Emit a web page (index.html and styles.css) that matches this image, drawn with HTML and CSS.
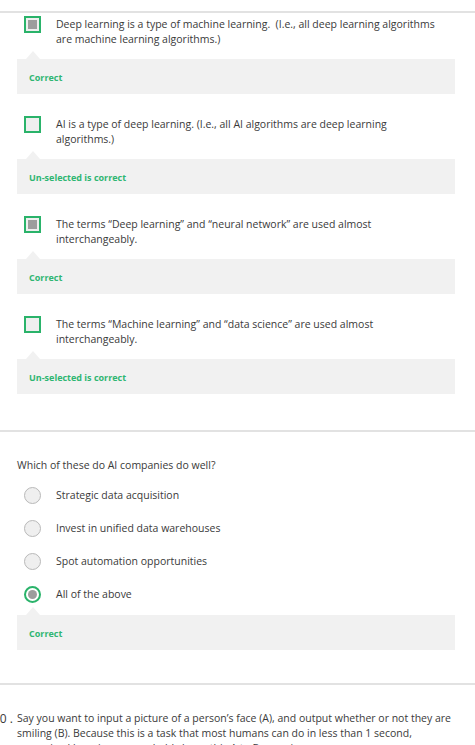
FILE: index.html
```html
<!DOCTYPE html>
<html>
<head>
<meta charset="utf-8">
<link rel="stylesheet" href="styles.css">
</head>
<body>
<div class="page">
  <hr class="divider top">
  <div class="quiz">
    <div class="option">
      <span class="check checked"></span>
      <span class="label">Deep learning is a type of machine learning.&nbsp; (I.e., all deep learning algorithms are machine learning algorithms.)</span>
    </div>
    <div class="feedback"><span>Correct</span></div>

    <div class="option">
      <span class="check"></span>
      <span class="label">AI is a type of deep learning. (I.e., all AI algorithms are deep learning algorithms.)</span>
    </div>
    <div class="feedback"><span>Un-selected is correct</span></div>

    <div class="option">
      <span class="check checked"></span>
      <span class="label">The terms “Deep learning” and “neural network” are used almost interchangeably.</span>
    </div>
    <div class="feedback"><span>Correct</span></div>

    <div class="option">
      <span class="check"></span>
      <span class="label">The terms “Machine learning” and “data science” are used almost interchangeably.</span>
    </div>
    <div class="feedback"><span>Un-selected is correct</span></div>
  </div>

  <hr class="divider mid">

  <div class="quiz q9">
    <p class="prompt">Which of these do AI companies do well?</p>
    <div class="radio-row"><span class="radio"></span><span class="label">Strategic data acquisition</span></div>
    <div class="radio-row"><span class="radio"></span><span class="label">Invest in unified data warehouses</span></div>
    <div class="radio-row"><span class="radio"></span><span class="label">Spot automation opportunities</span></div>
    <div class="radio-row"><span class="radio selected"></span><span class="label">All of the above</span></div>
    <div class="feedback radio-fb"><span>Correct</span></div>
  </div>

  <hr class="divider bottom">

  <div class="question">
    <span class="num">10.</span>
    <p class="qtext">Say you want to input a picture of a person’s face (A), and output whether or not they are smiling (B). Because this is a task that most humans can do in less than 1 second, supervised learning can probably learn this A to B mapping.</p>
  </div>
</div>
</body>
</html>
```
FILE: styles.css
```css
html, body {
  margin: 0;
  padding: 0;
  background: #fff;
}
body {
  font-family: "Open Sans", "DejaVu Sans", sans-serif;
  font-size: 10.5px;
  color: #3a3a3a;
  width: 475px;
  height: 745px;
  overflow: hidden;
}
.page {
  padding-top: 11px;
}
.divider {
  margin: 0;
  border: 0;
  border-top: 2px solid #e2e2e2;
  height: 0;
}
.quiz {
  padding: 0 20px 0 17px;
}
.option {
  display: flex;
  align-items: flex-start;
  padding-left: 7px;
  margin-top: 3px;
}
.check {
  flex: 0 0 auto;
  width: 13px;
  height: 13px;
  border: 2px solid #2ab36a;
  background: #efefef;
  box-sizing: content-box;
  position: relative;
}
.check.checked::after {
  content: "";
  position: absolute;
  left: 2px;
  top: 2px;
  width: 9px;
  height: 9px;
  background: #9d9d9d;
}
.label {
  margin-left: 15px;
  line-height: 14.5px;
  padding-top: 1px;
  max-width: 386px;
}
.feedback {
  position: relative;
  background: #f1f1f1;
  height: 35px;
  margin-top: 13px;
  margin-bottom: 22px;
  display: flex;
  align-items: center;
  padding-left: 12px;
}
.feedback::before {
  content: "";
  position: absolute;
  left: 9px;
  top: -8px;
  border-left: 7px solid transparent;
  border-right: 7px solid transparent;
  border-bottom: 8px solid #f1f1f1;
}
.feedback span {
  color: #2fb672;
  font-weight: 700;
  font-size: 9px;
  margin-top: 1px;
}
.divider.mid {
  margin-top: 36px;
}
.q9 {
  padding-top: 26px;
}
.prompt {
  margin: 0 0 15px 0;
  line-height: 14px;
}
.radio-row {
  display: flex;
  align-items: center;
  padding-left: 7px;
  height: 17px;
  margin-bottom: 16px;
}
.radio {
  flex: 0 0 auto;
  width: 15px;
  height: 15px;
  border-radius: 50%;
  border: 1px solid #b9b9b9;
  background: #efefef;
  box-sizing: content-box;
  position: relative;
}
.radio.selected {
  width: 13px;
  height: 13px;
  border: 2px solid #2ab36a;
  background: #fff;
}
.radio.selected::after {
  content: "";
  position: absolute;
  left: 2px;
  top: 2px;
  width: 9px;
  height: 9px;
  border-radius: 50%;
  background: #9d9d9d;
}
.radio-row .label {
  padding-top: 0;
}
.radio-fb {
  margin-top: -4px;
  margin-bottom: 33px;
}
.question {
  display: flex;
  align-items: flex-start;
  margin-top: 26px;
  padding-right: 20px;
}
.num {
  flex: 0 0 27px;
  margin-left: -10px;
  white-space: nowrap;
  font-size: 12px;
  line-height: 15px;
  letter-spacing: 3px;
}
.qtext {
  flex: 1 1 auto;
  margin: 0;
  line-height: 15px;
}
```
